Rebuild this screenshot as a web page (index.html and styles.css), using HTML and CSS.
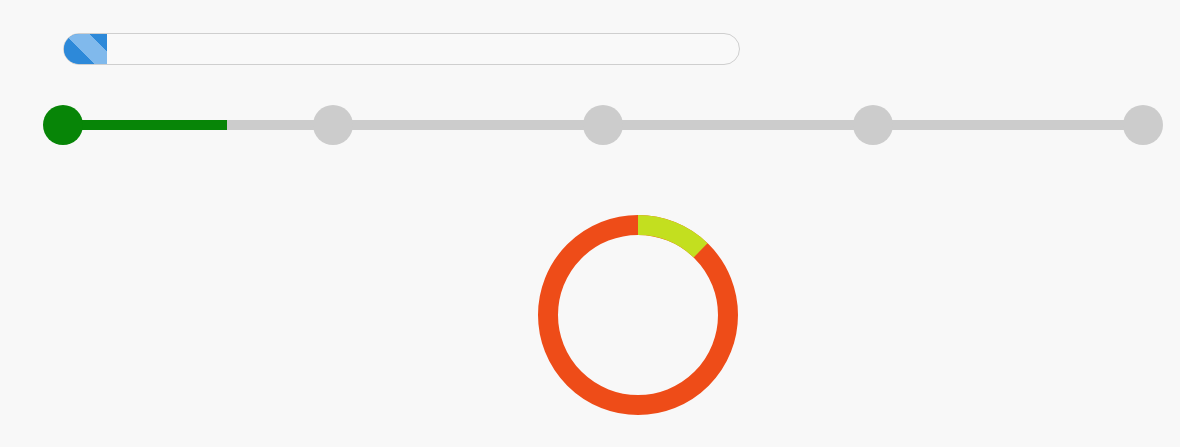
FILE: index.html
```html
<!DOCTYPE html>
<html lang="en">
<head>
<meta charset="utf-8">
<title>Progress indicators</title>
<link rel="stylesheet" href="styles.css">
</head>
<body>
<main class="page">
  <div class="progress" role="progressbar" aria-valuenow="6" aria-valuemin="0" aria-valuemax="100">
    <div class="progress-fill" style="width: 44px"></div>
  </div>

  <ol class="stepper">
    <li class="step step-done"></li>
    <li class="step"></li>
    <li class="step"></li>
    <li class="step"></li>
    <li class="step"></li>
  </ol>

  <div class="donut">
    <svg width="200" height="200" viewBox="0 0 200 200" aria-hidden="true">
      <circle class="donut-track" cx="100" cy="100" r="90"></circle>
      <circle class="donut-seg" cx="100" cy="100" r="90" stroke-dasharray="69.1 600" transform="rotate(-90 100 100)"></circle>
    </svg>
  </div>
</main>
</body>
</html>
```
FILE: styles.css
```css
html, body {
  margin: 0;
  padding: 0;
  background: #f8f8f8;
  font-family: "Liberation Sans", Arial, sans-serif;
}

.page {
  display: flex;
  flex-direction: column;
  align-items: flex-start;
  width: 1180px;
  height: 447px;
  box-sizing: border-box;
  padding-top: 33px;
}

.progress {
  margin-left: 63px;
  width: 677px;
  height: 32px;
  box-sizing: border-box;
  border: 1px solid #cfcfcf;
  border-radius: 16px;
  overflow: hidden;
  background: #f9f9f9;
  display: flex;
}

.progress-fill {
  margin: -1px 0 0 -1px;
  height: 32px;
  background-color: #2d89d9;
  background-image: linear-gradient(45deg,
    #80b9ec 25%, #2d89d9 25%, #2d89d9 50%,
    #80b9ec 50%, #80b9ec 75%, #2d89d9 75%);
  background-size: 50px 50px;
  background-position: 1px 0;
}

.stepper {
  list-style: none;
  margin: 40px 0 0 43px;
  padding: 0;
  width: 1120px;
  height: 40px;
  display: flex;
  justify-content: space-between;
  background:
    linear-gradient(#078507, #078507) no-repeat 20px 15px / 164px 10px,
    linear-gradient(#cccccc, #cccccc) no-repeat 20px 15px / 1080px 10px;
}

.step {
  width: 40px;
  height: 40px;
  border-radius: 50%;
  background: #cccccc;
}

.step-done {
  background: #078507;
}

.donut {
  margin: 70px 0 0 538px;
  width: 200px;
  height: 200px;
}

.donut svg {
  display: block;
}

.donut-track {
  fill: none;
  stroke: #ee4c18;
  stroke-width: 20;
}

.donut-seg {
  fill: none;
  stroke: #c3df1f;
  stroke-width: 20;
}
```
